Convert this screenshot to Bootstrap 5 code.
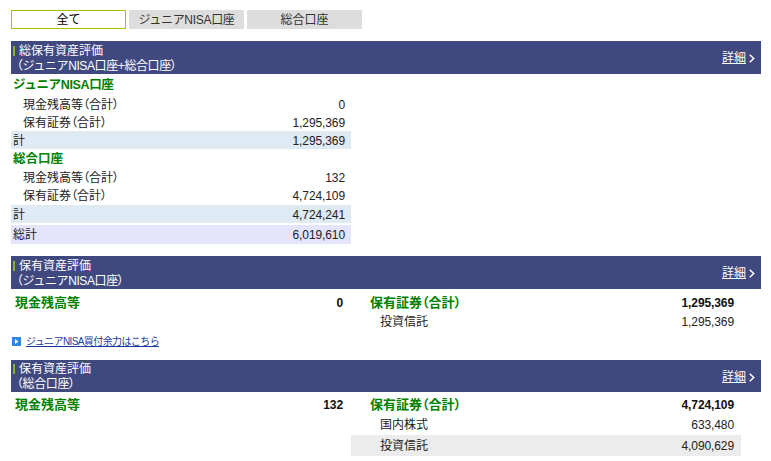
<!DOCTYPE html>
<html lang="ja">
<head>
<meta charset="utf-8">
<title>資産評価</title>
<link href="https://cdn.jsdelivr.net/npm/bootstrap@5.3.0/dist/css/bootstrap.min.css" rel="stylesheet">
<style>
body{font-family:"Liberation Sans","Noto Sans CJK JP",sans-serif;font-size:12px;line-height:14px;color:#222;background:#fff;margin:0}
.pg{width:750px;margin:10px 0 0 11px}
.tabs{gap:3px;margin-bottom:12px}
.tb{width:115px;height:19px;background:#ddd;color:#333;line-height:20px;text-align:center}
.tb.nar{letter-spacing:-.3px}
.tb.on{background:#fff;color:#000;border:1px solid #a4c400;line-height:18px}
.hd{background:#404880;color:#fff;height:33px;padding:2px 6px 0 0;line-height:15px}
.hd.thin{height:32px}
.ttl{display:block;height:15px}
.ttl span{display:inline-block;border-left:2px solid #8cb030;margin-left:2px;padding-left:4px;line-height:10px;height:10px}
.sb{letter-spacing:-.4px}
.hd a{color:#fff}
.chev{margin-left:3px}
.lst{width:340px}
.pn{font-feature-settings:"palt"}
.grp{color:#008000;font-weight:700;font-size:12.5px;padding-left:2px;height:19px;line-height:21px}
.grp.one{height:21px;line-height:23px;letter-spacing:-.35px}
.rw{height:18px;line-height:20px;padding:0 6px 0 2px}
.rw.tl{height:19px;line-height:21px}
.ind{padding-left:12px}
.num{letter-spacing:-.1px}
.kei{background:#deeaf4}
.tot{background:#e4e4fc;margin-top:2px;margin-bottom:12px}
.sec2{padding-top:3px}
.sec3{padding-top:2px}
.col1{width:340px;height:20px;line-height:22px;padding:0 8px 0 4px}
.col2{width:390px}
.gn{color:#008000;font-weight:700;font-size:13px}
.bd{font-weight:700;color:#111;letter-spacing:-.1px}
.r2{height:20px;line-height:22px;padding:0 7px 0 19px}
.r3{height:21px;line-height:23px;padding:0 7px 0 29px}
.r3.lo{height:19px;line-height:21px}
.gry{background:#ececec}
.lnk{height:17px;margin:2px 0 10px;padding-left:1px;gap:5px;font-size:10px;letter-spacing:-.6px;line-height:17px}
.lnk a{color:#1a3a9a}
.ico{width:9px;height:9px}
</style>
</head>
<body>
<div class="pg">
  <div class="d-flex tabs">
    <div class="tb on">全て</div>
    <div class="tb nar">ジュニアNISA口座</div>
    <div class="tb">総合口座</div>
  </div>

  <div class="hd d-flex justify-content-between align-items-center">
    <div><div class="ttl"><span>総保有資産評価</span></div><div class="sb">（ジュニアNISA口座+総合口座<span class="pn">）</span></div></div>
    <div class="d-flex align-items-center"><a href="#">詳細</a><svg class="chev" width="6" height="9" viewBox="0 0 6 9"><path d="M.7 .8l4 3.700-4 3.700" fill="none" stroke="#fff" stroke-width="1.500"/></svg></div>
  </div>
  <div class="lst">
    <div class="grp one">ジュニアNISA口座</div>
    <div class="rw d-flex justify-content-between ind"><span>現金残高等<span class="pn">（</span>合計<span class="pn">）</span></span><span class="num">0</span></div>
    <div class="rw d-flex justify-content-between ind"><span>保有証券<span class="pn">（</span>合計<span class="pn">）</span></span><span class="num">1,295,369</span></div>
    <div class="rw d-flex justify-content-between kei"><span>計</span><span class="num">1,295,369</span></div>
    <div class="grp">総合口座</div>
    <div class="rw d-flex justify-content-between ind"><span>現金残高等<span class="pn">（</span>合計<span class="pn">）</span></span><span class="num">132</span></div>
    <div class="rw tl d-flex justify-content-between ind"><span>保有証券<span class="pn">（</span>合計<span class="pn">）</span></span><span class="num">4,724,109</span></div>
    <div class="rw d-flex justify-content-between kei"><span>計</span><span class="num">4,724,241</span></div>
    <div class="rw tl d-flex justify-content-between tot"><span>総計</span><span class="num">6,019,610</span></div>
  </div>

  <div class="hd d-flex justify-content-between align-items-center">
    <div><div class="ttl"><span>保有資産評価</span></div><div class="sb">（ジュニアNISA口座<span class="pn">）</span></div></div>
    <div class="d-flex align-items-center"><a href="#">詳細</a><svg class="chev" width="6" height="9" viewBox="0 0 6 9"><path d="M.7 .8l4 3.700-4 3.700" fill="none" stroke="#fff" stroke-width="1.500"/></svg></div>
  </div>
  <div class="d-flex sec2">
    <div class="col1 d-flex justify-content-between"><span class="gn">現金残高等</span><span class="bd">0</span></div>
    <div class="col2">
      <div class="d-flex justify-content-between r2"><span class="gn">保有証券<span class="pn">（</span>合計<span class="pn">）</span></span><span class="bd">1,295,369</span></div>
      <div class="d-flex justify-content-between r3 lo"><span>投資信託</span><span class="num">1,295,369</span></div>
    </div>
  </div>
  <div class="d-flex align-items-center lnk">
    <svg class="ico" viewBox="0 0 9 9"><rect width="9" height="9" fill="#2a88e0"/><path d="M3 2l3.500 2.500L3 7z" fill="#fff"/></svg>
    <a href="#">ジュニアNISA買付余力はこちら</a>
  </div>

  <div class="hd thin d-flex justify-content-between align-items-center">
    <div><div class="ttl"><span>保有資産評価</span></div><div class="sb">（総合口座<span class="pn">）</span></div></div>
    <div class="d-flex align-items-center"><a href="#">詳細</a><svg class="chev" width="6" height="9" viewBox="0 0 6 9"><path d="M.7 .8l4 3.700-4 3.700" fill="none" stroke="#fff" stroke-width="1.500"/></svg></div>
  </div>
  <div class="d-flex sec3">
    <div class="col1 d-flex justify-content-between"><span class="gn">現金残高等</span><span class="bd">132</span></div>
    <div class="col2">
      <div class="d-flex justify-content-between r2"><span class="gn">保有証券<span class="pn">（</span>合計<span class="pn">）</span></span><span class="bd">4,724,109</span></div>
      <div class="d-flex justify-content-between r3"><span>国内株式</span><span class="num">633,480</span></div>
      <div class="d-flex justify-content-between r3 gry"><span>投資信託</span><span class="num">4,090,629</span></div>
    </div>
  </div>
</div>
</body>
</html>
